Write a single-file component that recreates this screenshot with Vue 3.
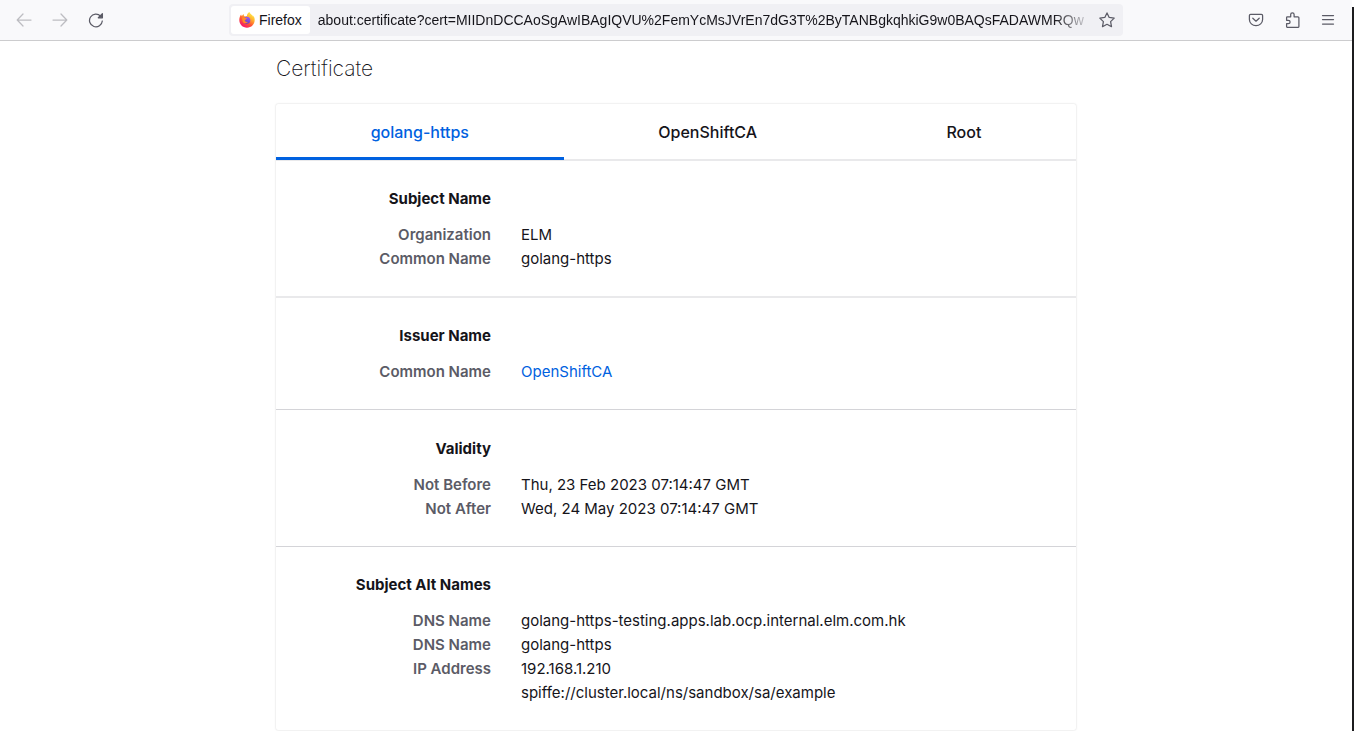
<script setup>
import { ref } from 'vue'

const url = ref('about:certificate?cert=MIIDnDCCAoSgAwIBAgIQVU%2FemYcMsJVrEn7dG3T%2ByTANBgkqhkiG9w0BAQsFADAWMRQw')
const tabs = ['golang-https', 'OpenShiftCA', 'Root']
const active = ref('golang-https')

const sections = [
  {
    title: 'Subject Name',
    soft: true,
    rows: [
      { label: 'Organization', value: 'ELM' },
      { label: 'Common Name', value: 'golang-https' },
    ],
  },
  {
    title: 'Issuer Name',
    rows: [{ label: 'Common Name', value: 'OpenShiftCA', link: true }],
  },
  {
    title: 'Validity',
    rows: [
      { label: 'Not Before', value: 'Thu, 23 Feb 2023 07:14:47 GMT' },
      { label: 'Not After', value: 'Wed, 24 May 2023 07:14:47 GMT' },
    ],
  },
  {
    title: 'Subject Alt Names',
    rows: [
      { label: 'DNS Name', value: 'golang-https-testing.apps.lab.ocp.internal.elm.com.hk' },
      { label: 'DNS Name', value: 'golang-https' },
      { label: 'IP Address', value: '192.168.1.210' },
      { label: '', value: 'spiffe://cluster.local/ns/sandbox/sa/example' },
    ],
  },
]
</script>

<template>
  <div class="window">
    <header class="toolbar">
      <nav class="nav" aria-label="History">
        <button class="icon-btn" disabled aria-label="Back">
          <svg width="16" height="16" viewBox="0 0 16 16" class="stroke faded"><path d="M15 8H1.5M7 2L1.2 8L7 14" /></svg>
        </button>
        <button class="icon-btn" disabled aria-label="Forward">
          <svg width="16" height="16" viewBox="0 0 16 16" class="stroke faded"><path d="M1 8H14.500M9 2L14.800 8L9 14" /></svg>
        </button>
        <button class="icon-btn" aria-label="Reload">
          <svg width="16" height="16" viewBox="0 0 16 16" class="stroke">
            <path d="M14.300 9A6.400 6.400 0 1 1 12.600 4.100" />
            <path class="solid" d="M14.400 1.700V5.800H10.300Z" />
          </svg>
        </button>
      </nav>
      <div class="urlbar">
        <button class="identity">
          <svg width="16" height="16" viewBox="0 0 16 16" aria-hidden="true">
            <defs>
              <linearGradient id="flame" x1="0.85" y1="0.05" x2="0.25" y2="0.95">
                <stop offset="0" stop-color="#fff44f" />
                <stop offset="0.35" stop-color="#ffb02e" />
                <stop offset="0.65" stop-color="#ff5634" />
                <stop offset="1" stop-color="#f5156c" />
              </linearGradient>
              <linearGradient id="globe" x1="0.7" y1="0" x2="0.3" y2="1">
                <stop offset="0" stop-color="#a05bf0" />
                <stop offset="1" stop-color="#5b3bc4" />
              </linearGradient>
            </defs>
            <path fill="url(#flame)" d="M15.300 5.400C14.900 4.500 14.200 3.600 13.600 3.200C14 4 14.200 4.500 14.300 5C13.300 2.700 11.300 2.300 10.400 0C8.800 .9 8 2.500 7.900 3.900C7.100 3.900 6.400 4.100 5.800 4.400C5.100 3.900 4.700 3.400 4.600 1.900C3.900 2.300 3.300 3.200 3 3.900C2.500 3.700 2.200 3.200 2.100 2.400C1 3.700 .3 5.700 .3 8C.3 12.400 3.700 15.700 8 15.700S15.700 12.300 15.700 8C15.700 7 15.600 6.100 15.300 5.400Z" />
            <circle cx="7.800" cy="8.300" r="3.500" fill="url(#globe)" />
            <path fill="#ff8a27" d="M3.200 5.600C4.600 4.700 6 5.300 6.400 5.900C7.200 5.900 8 5.900 8 6.300C7.900 7 6.800 7.200 6.600 7.400C6.500 8 6 8.300 5.600 8.600C6 9.700 7.400 10.300 9 9.800C7.900 11.800 5 11.700 3.800 9.700C3.200 8.500 3 7 3.200 5.600Z" />
          </svg>
          <span>Firefox</span>
        </button>
        <input v-model="url" class="address" type="text" aria-label="Address" spellcheck="false" />
        <button class="star" aria-label="Bookmark this page">
          <svg width="16" height="16" viewBox="0 0 16 16" class="stroke">
            <path d="M8 .9L10.200 5.400L15.200 6.100L11.600 9.600L12.500 14.700L8 12.300L3.500 14.700L4.400 9.600L.8 6.100L5.800 5.400Z" />
          </svg>
        </button>
      </div>
      <div class="tools">
        <button class="icon-btn" aria-label="Save to Pocket">
          <svg width="16" height="16" viewBox="0 0 16 16" class="stroke">
            <path d="M2.600 2.300H13.400Q14.600 2.300 14.600 3.500V7.500A6.600 6.200 0 0 1 1.400 7.500V3.500Q1.400 2.300 2.600 2.300Z" />
            <path d="M4.800 6.200L8 9.200L11.200 6.200" />
          </svg>
        </button>
        <button class="icon-btn" aria-label="Extensions">
          <svg width="16" height="16" viewBox="0 0 16 16" class="stroke">
            <path d="M3.300 4.800H6.700V2.600A1.700 1.700 0 0 1 10.100 2.600V4.800H13.900Q14.900 4.800 14.900 5.800V14.500Q14.900 15.400 13.900 15.400H3.600Q2.600 15.400 2.600 14.500V11.700H4.400A1.700 1.700 0 0 0 4.400 8.300H2.600V5.500Q2.600 4.800 3.300 4.800Z" />
          </svg>
        </button>
        <button class="icon-btn" aria-label="Open application menu">
          <svg width="16" height="16" viewBox="0 0 16 16" class="stroke"><path d="M2.500 3.500H13.500M2.500 7.500H13.500M2.500 12H13.500" /></svg>
        </button>
      </div>
    </header>

    <main class="page">
      <h1>Certificate</h1>
      <div class="card">
        <div class="tabs" role="tablist">
          <button
            v-for="tab in tabs"
            :key="tab"
            role="tab"
            class="tab"
            :class="{ active: tab === active }"
            :aria-selected="tab === active"
            @click="active = tab"
          >{{ tab }}</button>
        </div>
        <section v-for="s in sections" :key="s.title" class="group" :class="{ soft: s.soft }">
          <h2>{{ s.title }}</h2>
          <dl>
            <div v-for="(row, i) in s.rows" :key="i" class="row">
              <dt>{{ row.label }}</dt>
              <dd>
                <a v-if="row.link" href="#">{{ row.value }}</a>
                <template v-else>{{ row.value }}</template>
              </dd>
            </div>
          </dl>
        </section>
      </div>
    </main>
    <div class="edge" aria-hidden="true"></div>
  </div>
</template>

<style>
body {
  background: #fff;
}
</style>

<style scoped>
.window {
  position: relative;
  height: 100vh;
  overflow: hidden;
  padding-right: 2px;
  box-sizing: border-box;
  font-family: Inter, "Liberation Sans", sans-serif;
  color: #15141a;
}
.edge {
  position: absolute;
  top: 7px;
  right: 0;
  bottom: 0;
  width: 2px;
  background: #1c1c1e;
}
button {
  border: 0;
  padding: 0;
  margin: 0;
  background: none;
  font: inherit;
  color: inherit;
}
svg {
  display: block;
  flex: none;
}
.stroke {
  fill: none;
  stroke: #5b5b66;
  stroke-width: 1.25;
  stroke-linecap: round;
  stroke-linejoin: round;
}
.faded {
  stroke: #bdbdc2;
}
.stroke .solid {
  fill: #5b5b66;
}
.toolbar {
  display: flex;
  align-items: center;
  height: 40px;
  background: #f9f9fb;
  border-bottom: 1px solid #ccccce;
}
.nav,
.tools {
  display: flex;
  flex: 1 1 0;
  gap: 4px;
  padding: 0 8px;
}
.tools {
  justify-content: flex-end;
}
.icon-btn {
  display: grid;
  place-items: center;
  width: 32px;
  height: 32px;
}
.urlbar {
  display: flex;
  align-items: center;
  flex: 0 1 894px;
  height: 32px;
  border-radius: 4px;
  background: #f0f0f4;
  min-width: 0;
  box-sizing: border-box;
  padding: 0 2px;
  font-family: "Liberation Sans", Arial, sans-serif;
  font-size: 14px;
}
.identity {
  display: flex;
  align-items: center;
  gap: 4px;
  height: 28px;
  padding: 0 8px;
  border-radius: 3px;
  background: #fff;
}
.address {
  flex: 1;
  min-width: 0;
  height: 28px;
  margin-left: 8px;
  padding: 0;
  border: 0;
  outline: 0;
  background: none;
  color: #15141a;
  font: inherit;
  mask-image: linear-gradient(to left, transparent, #000 40px);
}
.star {
  display: grid;
  place-items: center;
  width: 28px;
  height: 28px;
}
.page {
  max-width: 800px;
  margin: 0 auto;
  padding-top: 14px;
}
h1 {
  margin: 0 0 21px;
  font-size: 21px;
  line-height: 28px;
  font-weight: 200;
}
.card {
  border-radius: 2px;
  box-shadow: 0 0 2px rgba(12, 12, 13, 0.2);
}
.tabs {
  display: flex;
  height: 56px;
  box-sizing: border-box;
  border-bottom: 1px solid #e9e9eb;
  box-shadow: 0 1px #e9e9eb;
}
.tab {
  flex: 1 1 auto;
  height: 56px;
  font-size: 16px;
  font-weight: 500;
  border-top: 3px solid transparent;
  border-bottom: 3px solid transparent;
}
.tab.active {
  color: #0061e0;
  border-bottom-color: #0061e0;
}
.group {
  padding: 27px 0 25px;
  border-bottom: 1px solid #d4d4d8;
}
.group:last-child {
  padding-top: 26px;
  border-bottom: 0;
}
.group.soft {
  border-bottom-color: #e9e9eb;
  box-shadow: 0 1px #e9e9eb;
}
h2 {
  width: 215px;
  margin: 0 0 12px;
  text-align: right;
  font-size: 15px;
  line-height: 24px;
  font-weight: 700;
}
dl {
  margin: 0;
}
.row {
  display: grid;
  grid-template-columns: 215px 1fr;
  column-gap: 30px;
  min-height: 24px;
  font-size: 15px;
  line-height: 24px;
}
dt {
  text-align: right;
  font-weight: 600;
  color: #5b5b66;
}
dd {
  margin: 0;
}
a {
  color: #0061e0;
  text-decoration: none;
}
</style>
